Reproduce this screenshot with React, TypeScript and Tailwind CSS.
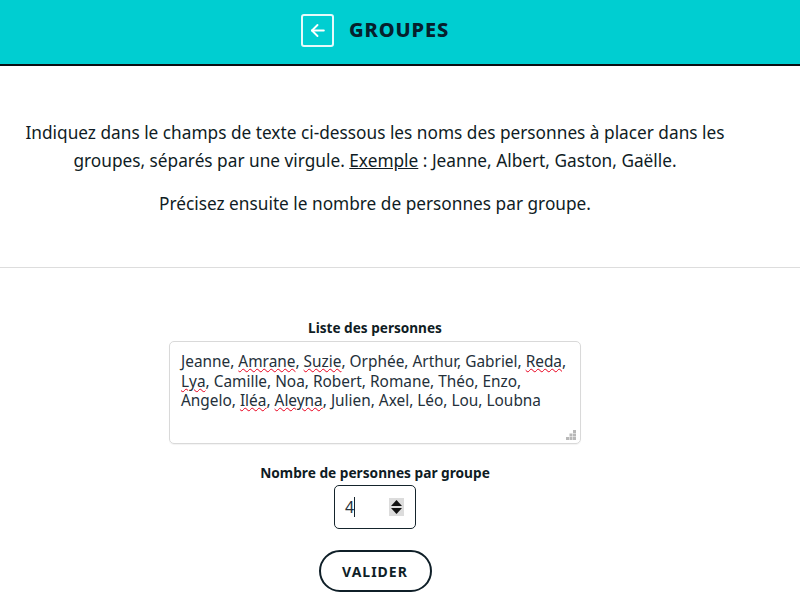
const wavy = "underline decoration-wavy decoration-[#e8001c] decoration-1 underline-offset-[1px]";

function Miss({ children }: { children: string }) {
  return <span className={wavy}>{children}</span>;
}

export default function App() {
  return (
    <div className="w-[800px] h-[608px] overflow-hidden bg-white text-[#0f1c24] font-['Noto_Sans','Open_Sans',sans-serif]">
      <header className="h-[66px] bg-[#00ced1] border-b-2 border-[#0b0f12] flex items-center pl-[301px] gap-[15px] pb-[4px]">
        <div className="w-[33px] h-[33px] rounded-[3px] border-2 border-white/90 flex items-center justify-center">
          <svg width="19" height="19" viewBox="0 0 24 24" fill="none" stroke="white" strokeWidth="2.4" strokeLinecap="round" strokeLinejoin="round">
            <path d="M20 12H5" />
            <path d="M12 5l-7 7 7 7" />
          </svg>
        </div>
        <h1 className="text-[20px] font-extrabold tracking-[0.9px] text-[#06202c]">GROUPES</h1>
      </header>

      <section className="h-[202px] border-b border-[#dddddd] pt-[53px] text-center text-[17.25px] leading-[28px]">
        <p className="w-[750px]">
          Indiquez dans le champs de texte ci-dessous les noms des personnes à placer dans les groupes, séparés par une virgule. <span className="underline">Exemple</span> : Jeanne, Albert, Gaston, Gaëlle.
        </p>
        <p className="w-[750px] mt-[15px]">Précisez ensuite le nombre de personnes par groupe.</p>
      </section>

      <form className="w-[750px] flex flex-col items-center pt-[51px]">
        <label className="text-[13.6px] font-bold leading-[18px] mb-[4px]">Liste des personnes</label>
        <div className="relative w-[412px] h-[103px] rounded-[5px] border border-[#d9d9d9] px-[11px] pt-[10px] text-[15.4px] leading-[19.5px] text-[#24303a] shadow-[0_1px_1px_rgba(0,0,0,0.05)]">
          Jeanne, <Miss>Amrane</Miss>, <Miss>Suzie</Miss>, Orphée, Arthur, Gabriel, <Miss>Reda</Miss>,
          <br />
          <Miss>Lya</Miss>, Camille, Noa, Robert, Romane, Théo, Enzo,
          <br />
          Angelo, <Miss>Iléa</Miss>, <Miss>Aleyna</Miss>, Julien, Axel, Léo, Lou, Loubna
          <svg className="absolute right-[3px] bottom-[2px]" width="11" height="11" viewBox="0 0 11 11" fill="#b8b8b8">
            <rect x="7" y="0" width="3" height="3" />
            <rect x="3.5" y="3.5" width="3" height="3" />
            <rect x="7" y="3.5" width="3" height="3" />
            <rect x="0" y="7" width="3" height="3" />
            <rect x="3.5" y="7" width="3" height="3" />
            <rect x="7" y="7" width="3" height="3" />
          </svg>
        </div>
        <label className="text-[13.7px] font-bold leading-[18px] mt-[20px] mb-[3px]">Nombre de personnes par groupe</label>
        <div className="w-[82px] h-[44px] rounded-[5px] border border-[#15242c] flex items-center pl-[10px] pr-[11px] text-[16px] text-[#24303a]">
          <span>4</span>
          <span className="w-px h-[20px] bg-[#15242c]" />
          <div className="ml-auto w-[15px] h-[18px] bg-[#dcdcdc] flex flex-col items-center justify-center gap-[2px]">
            <svg width="11" height="6" viewBox="0 0 11 6"><path d="M5.5 0L11 6H0z" fill="#111" /></svg>
            <svg width="11" height="6" viewBox="0 0 11 6"><path d="M0 0H11L5.5 6z" fill="#111" /></svg>
          </div>
        </div>
        <button type="button" className="mt-[21px] w-[113px] h-[42px] rounded-full border-2 border-[#0f1f28] bg-white text-[14px] font-bold tracking-[1px] text-[#0f1f28]">
          VALIDER
        </button>
      </form>
    </div>
  );
}
